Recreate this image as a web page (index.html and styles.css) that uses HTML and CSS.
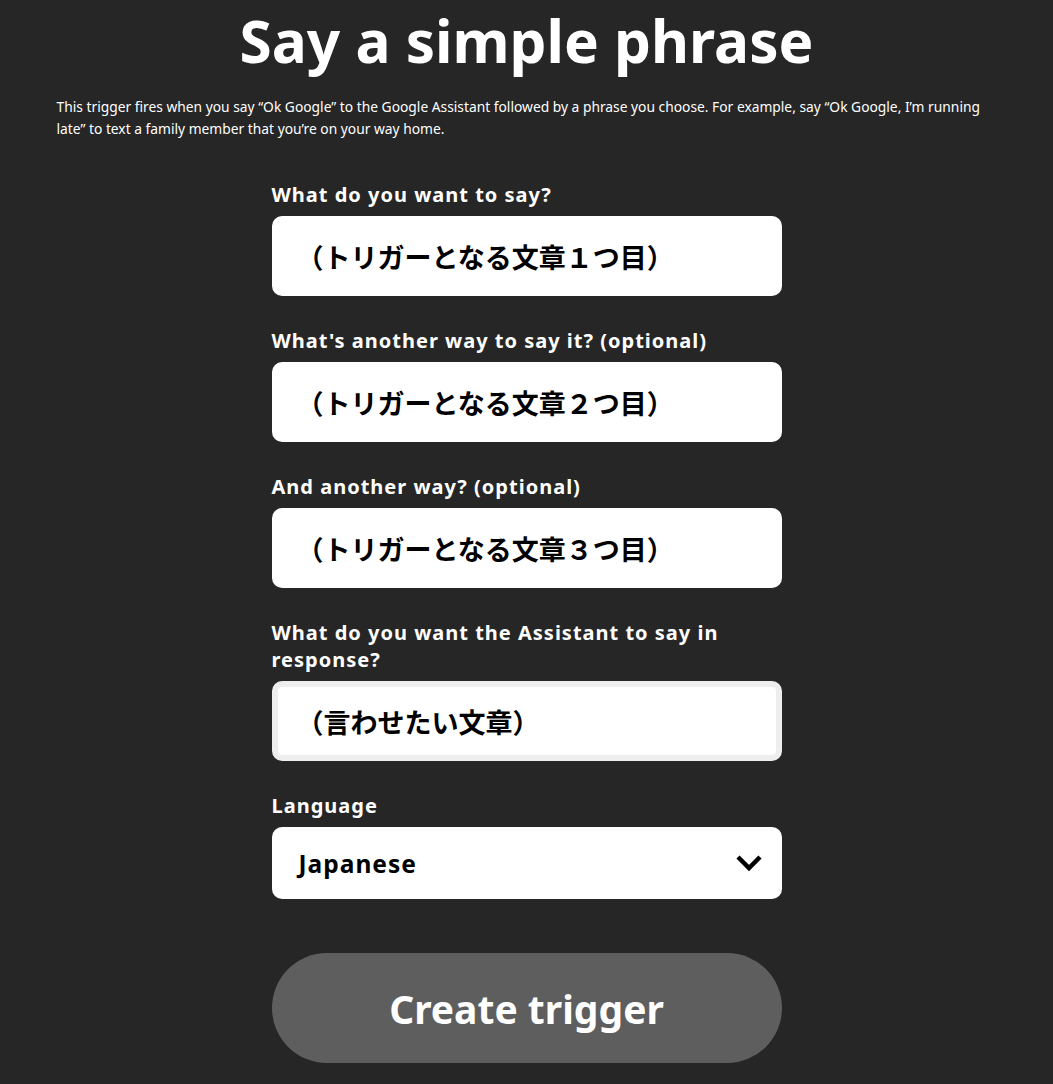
FILE: index.html
```html
<!DOCTYPE html>
<html lang="en">
    <head>
        <meta charset="UTF-8">
        <title>Say a simple phrase</title>
        <link rel="stylesheet" href="styles.css">
    </head>
    <body>
        <main class="page">

            <h1 class="title">Say a simple phrase</h1>

            <p class="intro">This trigger fires when you say “Ok Google” to the Google Assistant followed by a phrase you choose. For example, say “Ok Google, I’m running late” to text a family member that you’re on your way home.</p>

            <form class="trigger-form">

                <div class="field">
                    <label class="field-label">What do you want to say?</label>
                    <div class="field-input">（トリガーとなる文章１つ目）</div>
                </div>

                <div class="field">
                    <label class="field-label">What's another way to say it? (optional)</label>
                    <div class="field-input">（トリガーとなる文章２つ目）</div>
                </div>

                <div class="field">
                    <label class="field-label">And another way? (optional)</label>
                    <div class="field-input">（トリガーとなる文章３つ目）</div>
                </div>

                <div class="field">
                    <label class="field-label">What do you want the Assistant to say in response?</label>
                    <div class="field-input field-textarea">（言わせたい文章）</div>
                </div>

                <div class="field">
                    <label class="field-label">Language</label>
                    <div class="field-select">
                        <span>Japanese</span>
                        <svg class="chevron" width="28" height="18" viewBox="0 0 28 18">
                            <path d="M3 3 L14 14 L25 3" fill="none" stroke="#000" stroke-width="4.5"/>
                        </svg>
                    </div>
                </div>

                <button type="button" class="submit">Create trigger</button>

            </form>

        </main>
    </body>
</html>
```

FILE: styles.css
```css
/* General */
html, body { margin: 0; padding: 0; }
body
{
    background-color: #262626;
    color: #ffffff;
    font-family: 'Noto Sans', sans-serif;
}

.page
{
    width: 940px;
    margin: 0 auto;
}

.title
{
    margin: 0;
    padding-top: 4px;
    text-align: center;
    font-size: 58.5px;
    font-weight: 700;
    line-height: 72px;
}

.intro
{
    margin: 20px 0 0 0;
    font-size: 13.8px;
    line-height: 22px;
}

/* Form */
.trigger-form
{
    width: 510px;
    margin: 41px auto 0 auto;
}

.field { margin-bottom: 31px; }

.field-label
{
    display: block;
    font-size: 20px;
    font-weight: 700;
    letter-spacing: 1px;
    line-height: 27px;
    margin-bottom: 8px;
}

.field-input
{
    box-sizing: border-box;
    height: 80px;
    padding: 0 25px;
    display: flex;
    align-items: center;
    background-color: #ffffff;
    border-radius: 10px;
    color: #000000;
    font-family: 'Noto Sans CJK JP', sans-serif;
    font-size: 27px;
    font-weight: 700;
}

.field-textarea
{
    border: 6px solid #eeeeee;
    padding: 0 19px;
}

.field-select
{
    box-sizing: border-box;
    height: 72px;
    padding: 0 19px 0 27px;
    display: flex;
    align-items: center;
    justify-content: space-between;
    background-color: #ffffff;
    border-radius: 10px;
    color: #000000;
    font-size: 24.5px;
    font-weight: 700;
    letter-spacing: 1px;
}

.chevron { display: block; }

.submit
{
    display: block;
    width: 100%;
    height: 110px;
    margin-top: 54px;
    border: none;
    border-radius: 55px;
    background-color: #5e5e5e;
    color: #ffffff;
    font-family: 'Noto Sans', sans-serif;
    font-size: 39px;
    font-weight: 700;
}
```
